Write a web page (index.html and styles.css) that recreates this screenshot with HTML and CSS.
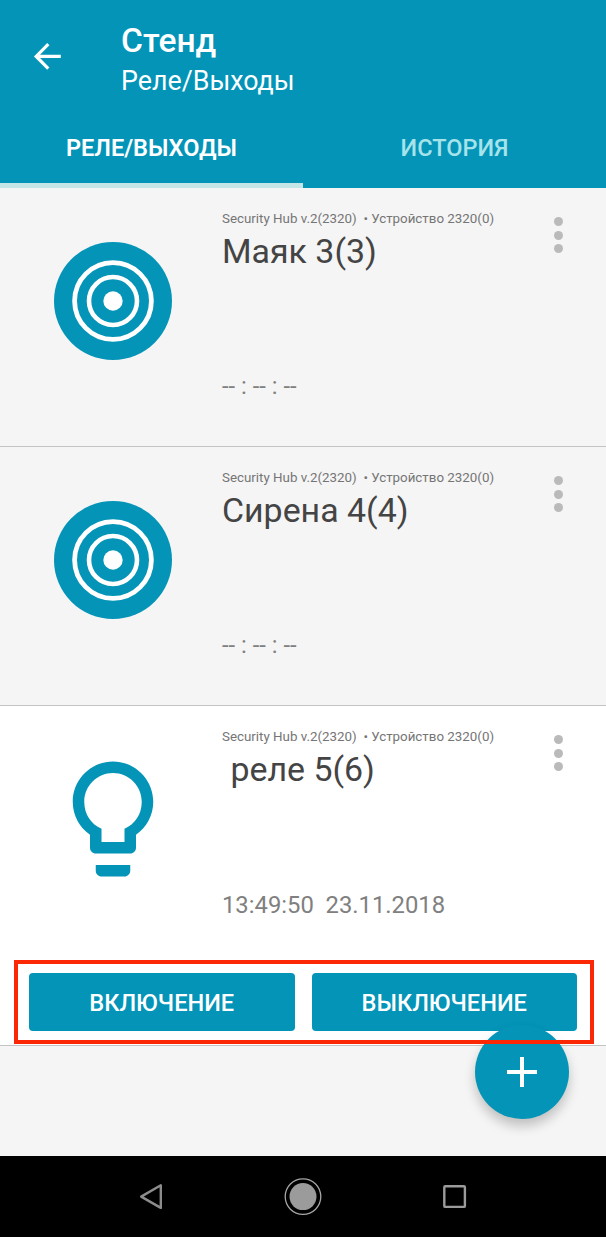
FILE: index.html
```html
<!DOCTYPE html>
<html lang="ru">
<head>
    <meta charset="UTF-8">
    <title>Реле/Выходы</title>
    <link rel="stylesheet" href="styles.css">
</head>
<body>

    <header class="header">
        <div class="toolbar">
            <svg class="back" viewBox="0 0 40 40">
                <path d="M33.8 20.4H9.5M21.3 8.2L9.2 20.4L21.3 32.6" fill="none" stroke="#fff" stroke-width="3.2"/>
            </svg>
            <div class="titles">
                <h1>Стенд</h1>
                <h2>Реле/Выходы</h2>
            </div>
        </div>
        <nav class="tabs">
            <a class="tab active">РЕЛЕ/ВЫХОДЫ</a>
            <a class="tab">ИСТОРИЯ</a>
        </nav>
    </header>

    <main class="list">
        <section class="item">
            <div class="item-row">
                <svg class="item-icon" viewBox="0 0 138 138">
                    <circle cx="69" cy="69" r="59" fill="#0394b8"/>
                    <circle cx="69" cy="69" r="38.4" fill="none" stroke="#fff" stroke-width="4.8"/>
                    <circle cx="69" cy="69" r="24" fill="none" stroke="#fff" stroke-width="4.6"/>
                    <circle cx="69" cy="69" r="9.7" fill="#fff"/>
                </svg>
                <div class="item-info">
                    <p class="device">Security Hub v.2(2320) &nbsp;• Устройство 2320(0)</p>
                    <h3>Маяк 3(3)</h3>
                    <p class="time">-- : -- : --</p>
                </div>
                <div class="more"><i></i><i></i><i></i></div>
            </div>
        </section>

        <section class="item">
            <div class="item-row">
                <svg class="item-icon" viewBox="0 0 138 138">
                    <circle cx="69" cy="69" r="59" fill="#0394b8"/>
                    <circle cx="69" cy="69" r="38.4" fill="none" stroke="#fff" stroke-width="4.8"/>
                    <circle cx="69" cy="69" r="24" fill="none" stroke="#fff" stroke-width="4.6"/>
                    <circle cx="69" cy="69" r="9.7" fill="#fff"/>
                </svg>
                <div class="item-info">
                    <p class="device">Security Hub v.2(2320) &nbsp;• Устройство 2320(0)</p>
                    <h3>Сирена 4(4)</h3>
                    <p class="time">-- : -- : --</p>
                </div>
                <div class="more"><i></i><i></i><i></i></div>
            </div>
        </section>

        <section class="item open">
            <div class="item-row">
                <svg class="item-icon" viewBox="0 0 24 24">
                    <path fill="#0394b8" d="M9 21c0 .55.45 1 1 1h4c.55 0 1-.45 1-1v-1H9v1zm3-19C8.14 2 5 5.14 5 9c0 2.38 1.19 4.47 3 5.74V17c0 .55.45 1 1 1h6c.55 0 1-.45 1-1v-2.26c1.81-1.27 3-3.36 3-5.74 0-3.86-3.14-7-7-7zm2 11.7V16h-4v-2.3C8.2 12.9 7 11.2 7 9c0-2.76 2.24-5 5-5s5 2.24 5 5c0 2.2-1.2 3.9-3 4.7z"/>
                </svg>
                <div class="item-info">
                    <p class="device">Security Hub v.2(2320) &nbsp;• Устройство 2320(0)</p>
                    <h3>&nbsp;реле 5(6)</h3>
                    <p class="time">13:49:50 &nbsp;23.11.2018</p>
                </div>
                <div class="more"><i></i><i></i><i></i></div>
            </div>
            <div class="actions">
                <button type="button">ВКЛЮЧЕНИЕ</button>
                <button type="button">ВЫКЛЮЧЕНИЕ</button>
            </div>
        </section>

        <button type="button" class="fab">
            <svg viewBox="0 0 30 30">
                <path d="M15 0V30M0 15H30" stroke="#fff" stroke-width="4"/>
            </svg>
        </button>
    </main>

    <footer class="navbar">
        <svg viewBox="0 0 40 40">
            <path d="M29.8 8.3V30.9L10.2 19.6Z" fill="none" stroke="#8c8c8c" stroke-width="2.4" stroke-linejoin="round"/>
        </svg>
        <svg viewBox="0 0 40 40">
            <circle cx="20" cy="19.6" r="17.8" fill="none" stroke="#a5a5a5" stroke-width="1.3"/>
            <circle cx="20" cy="19.6" r="13.5" fill="#9b9b9b"/>
        </svg>
        <svg viewBox="0 0 40 40">
            <rect x="9.3" y="9.3" width="20.6" height="20.6" rx="1" fill="none" stroke="#9b9b9b" stroke-width="2.4"/>
        </svg>
    </footer>

</body>
</html>
```

FILE: styles.css
```css
* {
    box-sizing: border-box;
}

body {
    margin: 0;
    height: 1237px;
    display: flex;
    flex-direction: column;
    font-family: Roboto, "Liberation Sans", sans-serif;
    background-color: #f5f5f5;
}

h1, h2, h3, p {
    margin: 0;
    font-weight: 400;
    white-space: nowrap;
}

.header {
    height: 188px;
    display: flex;
    flex-direction: column;
    background-color: #0394b8;
    color: #fff;
}

.toolbar {
    height: 108px;
    display: flex;
    padding: 20px 0 0 27px;
}

.back {
    width: 40px;
    height: 40px;
    margin-top: 16px;
}

.titles {
    margin-left: 54px;
    padding-top: 1px;
}

h1 {
    font-size: 33.6px;
    font-weight: 500;
    line-height: 40px;
}

h2 {
    font-size: 26.8px;
    line-height: 40px;
}

.tabs {
    flex: 1;
    display: flex;
}

.tab {
    flex: 1;
    padding-top: 5px;
    text-align: center;
    font-size: 23.5px;
    font-weight: 500;
    line-height: 70px;
    color: #a6e3ea;
}

.tab.active {
    color: #fff;
    font-weight: 600;
    border-bottom: 5px solid #c5e6e6;
}

.list {
    flex: 1;
    position: relative;
}

.item {
    height: 259px;
    border-bottom: 1px solid #c4c4c4;
}

.item-row {
    display: flex;
    padding-left: 44px;
}

.item-icon {
    width: 138px;
    height: 138px;
    margin-top: 43.7px;
}

.item-info {
    flex: 1;
    margin-left: 40px;
    padding-top: 20px;
}

.device {
    font-size: 13.35px;
    line-height: 21px;
    color: #757575;
}

h3 {
    font-size: 33.9px;
    line-height: 45px;
    color: #444;
}

.time {
    margin-top: 97px;
    font-size: 23.8px;
    line-height: 30px;
    color: #808080;
}

.more {
    width: 9px;
    margin: 29px 43px 0 0;
    display: flex;
    flex-direction: column;
    gap: 4.5px;
}

.more i {
    width: 9px;
    height: 9px;
    border-radius: 50%;
    background-color: #bababa;
}

.item.open {
    height: 340px;
    background-color: #fff;
}

.open .item-icon {
    margin-top: 44.2px;
}

.open .time {
    margin-top: 98px;
}

.actions {
    display: flex;
    gap: 17px;
    height: 84px;
    margin: 40px 12px 0 14px;
    padding: 13px 17px 0 15px;
    position: relative;
}

/* frame line stays over the round button */
.actions::after {
    content: "";
    position: absolute;
    inset: 0;
    border: 4px solid #fb2705;
    z-index: 2;
    pointer-events: none;
}

.actions button {
    flex: 1;
    height: 58px;
    padding: 2px 0 0;
    border: none;
    border-radius: 4px;
    background-color: #0394b8;
    color: #fff;
    font-family: inherit;
    font-size: 23.6px;
    font-weight: 500;
}

.fab {
    position: absolute;
    z-index: 1;
    right: 37px;
    bottom: 37px;
    width: 94px;
    height: 94px;
    border: none;
    border-radius: 50%;
    background-color: #0394b8;
    box-shadow: 0 7px 12px rgba(0, 0, 0, 0.22);
    display: flex;
    align-items: center;
    justify-content: center;
}

.fab svg {
    width: 30px;
    height: 30px;
}

.navbar {
    height: 81px;
    display: flex;
    align-items: center;
    justify-content: center;
    gap: 112px;
    background-color: #000;
}

.navbar svg {
    width: 40px;
    height: 40px;
}
```
